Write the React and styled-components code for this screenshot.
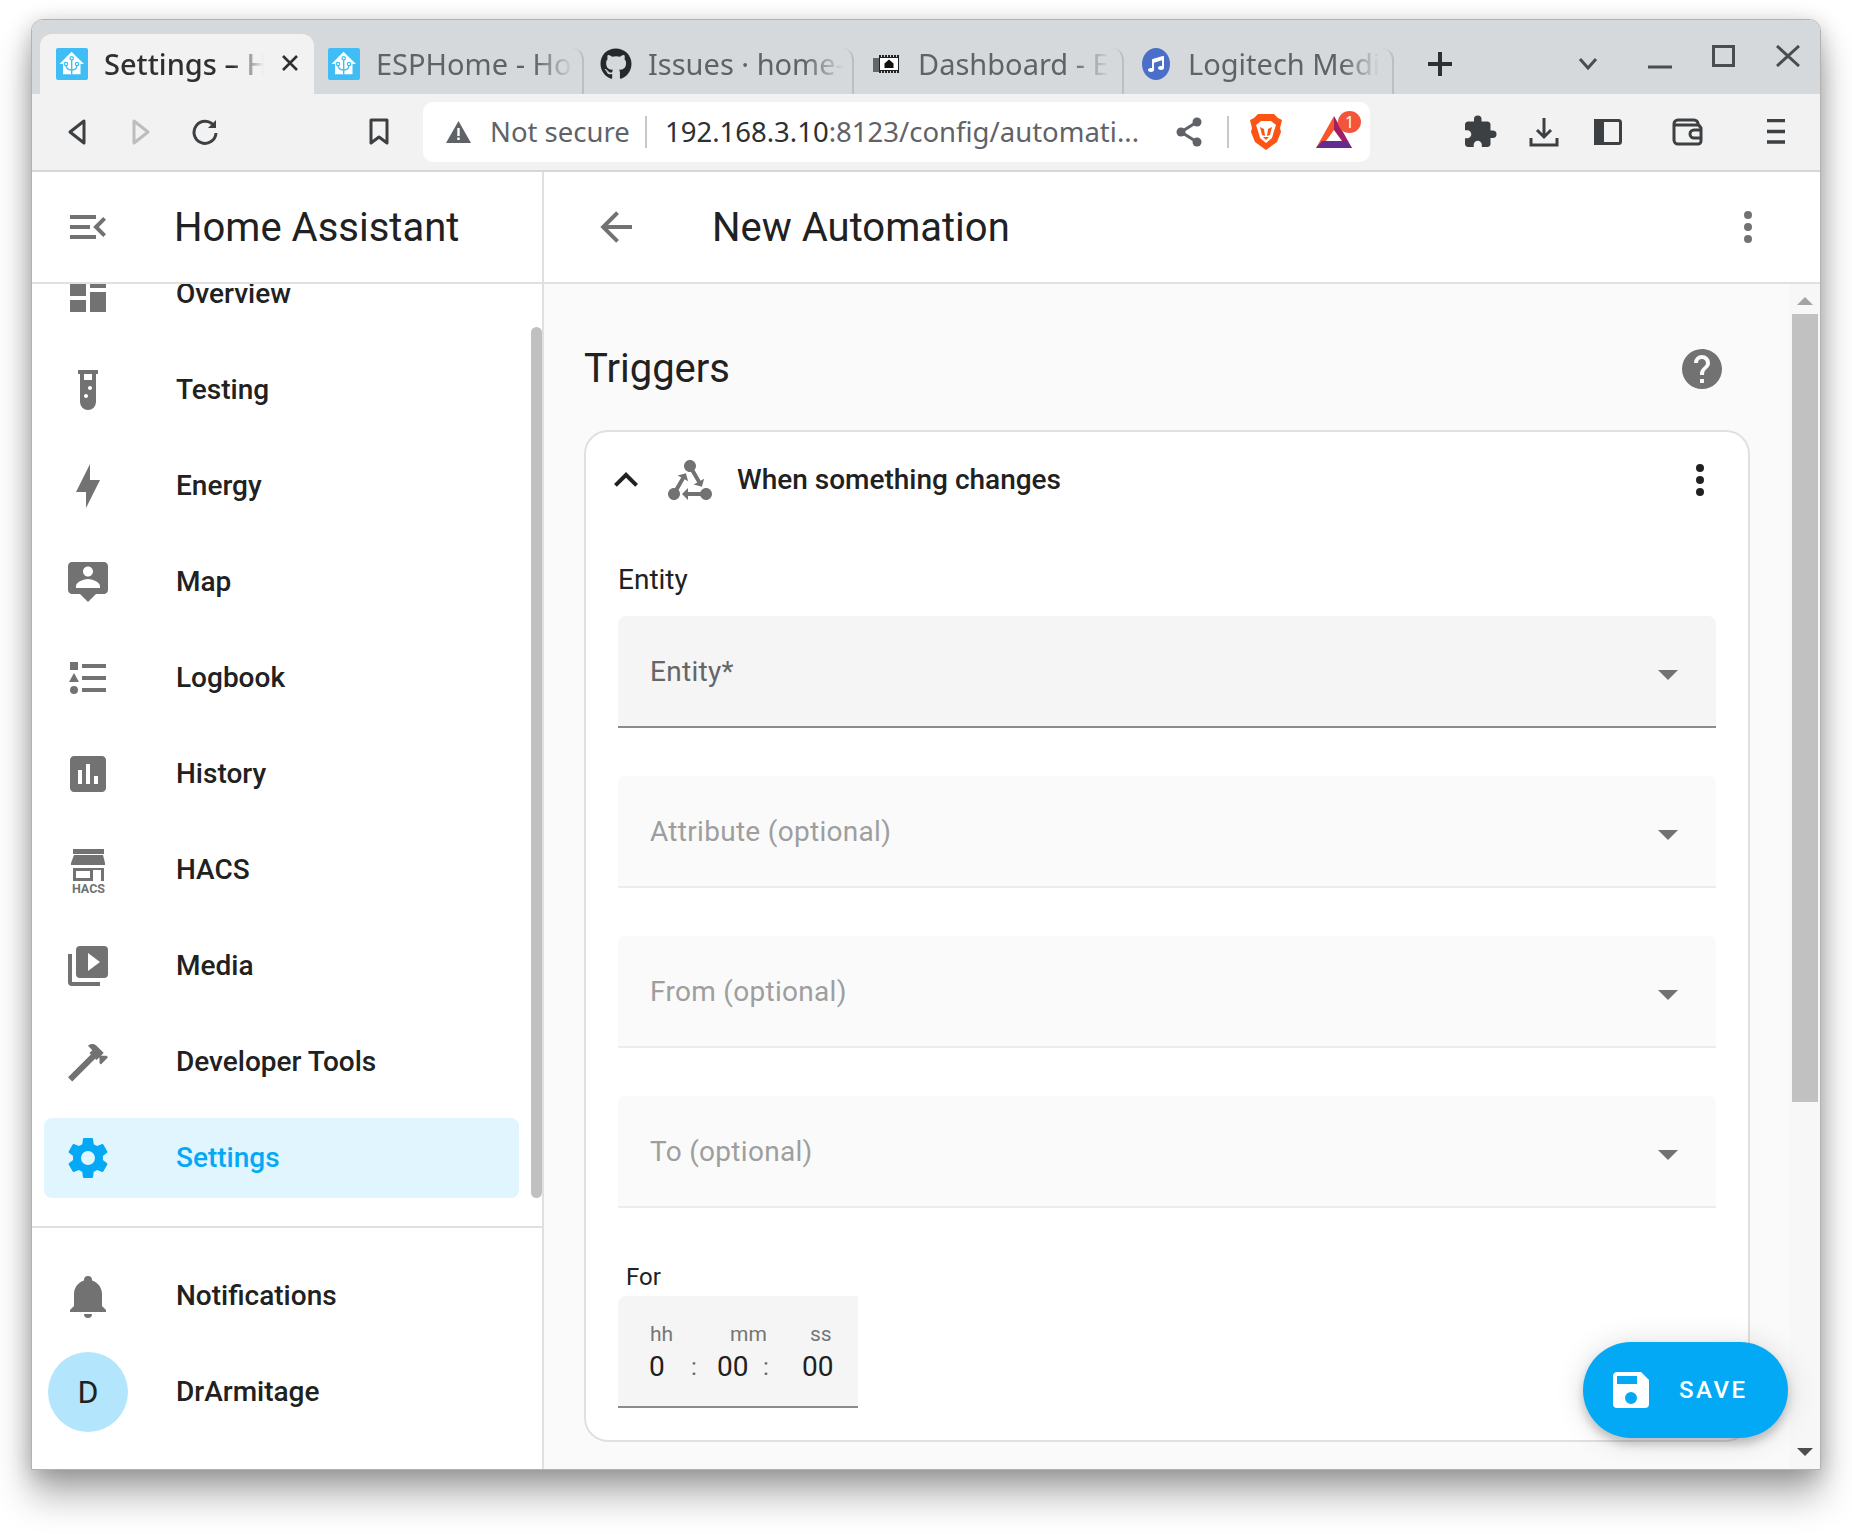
import React from "react";
import styled, { createGlobalStyle } from "styled-components";
import { FaGithub, FaMusic } from "react-icons/fa";
import { MdExtension } from "react-icons/md";

const paths = {
  dashboard: "M13,3V9H21V3M13,21H21V11H13M3,21H11V15H3M3,13H11V3H3V13Z",
  testTube:
    "M7,2V4H8V18A4,4 0 0,0 12,22A4,4 0 0,0 16,18V4H17V2H7M11,16C10.4,16 10,15.6 10,15C10,14.4 10.4,14 11,14C11.6,14 12,14.4 12,15C12,15.6 11.6,16 11,16M13,12C12.4,12 12,11.6 12,11C12,10.4 12.4,10 13,10C13.6,10 14,10.4 14,11C14,11.6 13.6,12 13,12M14,7H10V4H14V7Z",
  bolt: "M11 15H6L13 1V9H18L11 23V15Z",
  tooltipAccount:
    "M2 4C2 2.89 2.9 2 4 2H20C21.11 2 22 2.9 22 4V16C22 17.11 21.11 18 20 18H16L12 22L8 18H4C2.9 18 2 17.11 2 16V4M12 4.3C10.6 4.3 9.5 5.4 9.5 6.8S10.6 9.3 12 9.3 14.5 8.2 14.5 6.8 13.4 4.3 12 4.3M18 15V14C18 12 14 10.5 12 10.5S6 12 6 14V15H18Z",
  listType:
    "M5,9.5L7.5,14H2.5L5,9.5M3,4H7V8H3V4M5,20A2,2 0 0,0 7,18A2,2 0 0,0 5,16A2,2 0 0,0 3,18A2,2 0 0,0 5,20M9,5V7H21V5H9M9,19H21V17H9V19M9,13H21V11H9V13Z",
  chartBox:
    "M19 3H5C3.9 3 3 3.9 3 5V19C3 20.1 3.9 21 5 21H19C20.1 21 21 20.1 21 19V5C21 3.9 20.1 3 19 3M9 17H7V10H9V17M13 17H11V7H13V17M17 17H15V13H17V17Z",
  playBox:
    "M4,6H2V20A2,2 0 0,0 4,22H18V20H4V6M20,2H8A2,2 0 0,0 6,4V16A2,2 0 0,0 8,18H20A2,2 0 0,0 22,16V4A2,2 0 0,0 20,2M12,14.5V5.5L18,10L12,14.5Z",
  hammer:
    "M2 19.63L13.43 8.2L12.72 7.5L14.14 6.07L12 3.89C13.2 2.7 15.09 2.7 16.27 3.89L19.87 7.5L18.45 8.91H21.29L22 9.62L18.45 13.21L17.74 12.5V9.62L16.27 11.04L15.56 10.33L4.13 21.76L2 19.63Z",
  cog: "M12,15.5A3.5,3.5 0 0,1 8.5,12A3.5,3.5 0 0,1 12,8.5A3.5,3.5 0 0,1 15.5,12A3.5,3.5 0 0,1 12,15.5M19.43,12.97C19.47,12.65 19.5,12.33 19.5,12C19.5,11.67 19.47,11.34 19.43,11L21.54,9.37C21.73,9.22 21.78,8.95 21.66,8.73L19.66,5.27C19.54,5.05 19.27,4.96 19.05,5.05L16.56,6.05C16.04,5.66 15.5,5.32 14.87,5.07L14.5,2.42C14.46,2.18 14.25,2 14,2H10C9.75,2 9.54,2.18 9.5,2.42L9.13,5.07C8.5,5.32 7.96,5.66 7.44,6.05L4.95,5.05C4.73,4.96 4.46,5.05 4.34,5.27L2.34,8.73C2.21,8.95 2.27,9.22 2.46,9.37L4.57,11C4.53,11.34 4.5,11.67 4.5,12C4.5,12.33 4.53,12.65 4.57,12.97L2.46,14.63C2.27,14.78 2.21,15.05 2.34,15.27L4.34,18.73C4.46,18.95 4.73,19.03 4.95,18.95L7.44,17.94C7.96,18.34 8.5,18.68 9.13,18.93L9.5,21.58C9.54,21.82 9.75,22 10,22H14C14.25,22 14.46,21.82 14.5,21.58L14.87,18.93C15.5,18.67 16.04,18.34 16.56,17.94L19.05,18.95C19.27,19.03 19.54,18.95 19.66,18.73L21.66,15.27C21.78,15.05 21.73,14.78 21.54,14.63L19.43,12.97Z",
  bell: "M21,19V20H3V19L5,17V11C5,7.9 7.03,5.17 10,4.29C10,4.19 10,4.1 10,4A2,2 0 0,1 12,2A2,2 0 0,1 14,4C14,4.1 14,4.19 14,4.29C16.97,5.17 19,7.9 19,11V17L21,19M14,21A2,2 0 0,1 12,23A2,2 0 0,1 10,21",
  menuOpen:
    "M21,15.61L19.59,17L14.58,12L19.59,7L21,8.39L17.44,12L21,15.61M3,6H16V8H3V6M3,13V11H13V13H3M3,18V16H16V18H3Z",
  arrowLeft:
    "M20,11V13H8L13.5,18.5L12.08,19.92L4.16,12L12.08,4.08L13.5,5.5L8,11H20Z",
  dots: "M12,16A2,2 0 0,1 14,18A2,2 0 0,1 12,20A2,2 0 0,1 10,18A2,2 0 0,1 12,16M12,10A2,2 0 0,1 14,12A2,2 0 0,1 12,14A2,2 0 0,1 10,12A2,2 0 0,1 12,10M12,4A2,2 0 0,1 14,6A2,2 0 0,1 12,8A2,2 0 0,1 10,6A2,2 0 0,1 12,4Z",
  help: "M15.07,11.25L14.17,12.17C13.45,12.89 13,13.5 13,15H11V14.5C11,13.39 11.45,12.39 12.17,11.67L13.41,10.41C13.78,10.05 14,9.55 14,9C14,7.89 13.1,7 12,7A2,2 0 0,0 10,9H8A4,4 0 0,1 12,5A4,4 0 0,1 16,9C16,9.88 15.64,10.67 15.07,11.25M13,19H11V17H13M12,2A10,10 0 0,0 2,12A10,10 0 0,0 12,22A10,10 0 0,0 22,12C22,6.47 17.5,2 12,2Z",
  chevronUp: "M7.41,15.41L12,10.83L16.59,15.41L18,14L12,8L6,14L7.41,15.41Z",
  save: "M15,9H5V5H15M12,19A3,3 0 0,1 9,16A3,3 0 0,1 12,13A3,3 0 0,1 15,16A3,3 0 0,1 12,19M17,3H5C3.89,3 3,3.9 3,5V19A2,2 0 0,0 5,21H19A2,2 0 0,0 21,19V7L17,3Z",
  menuDown: "M7,10L12,15L17,10H7Z",
  stateMachine:
    "M6.27 17.05C6.72 17.58 7 18.25 7 19C7 20.66 5.66 22 4 22S1 20.66 1 19 2.34 16 4 16C4.18 16 4.36 16 4.53 16.05L7.6 10.69L5.86 9.7L9.95 8.58L11.07 12.67L9.33 11.68L6.27 17.05M20 16C18.7 16 17.6 16.84 17.18 18H11V16L8 19L11 22V20H17.18C17.6 21.16 18.7 22 20 22C21.66 22 23 20.66 23 19S21.66 16 20 16M12 8C12.18 8 12.36 8 12.53 7.95L15.6 13.31L13.86 14.3L17.95 15.42L19.07 11.33L17.33 12.32L14.27 6.95C14.72 6.42 15 5.75 15 5C15 3.34 13.66 2 12 2S9 3.34 9 5 10.34 8 12 8Z",
};

const GlobalStyle = createGlobalStyle`
  html, body {
    margin: 0;
    background: #fff;
  }
  * {
    box-sizing: border-box;
  }
`;

const chromeFont = `"Noto Sans", "Open Sans", sans-serif`;

const Page = styled.div`
  width: 1852px;
  height: 1534px;
  padding: 19px 0 0 31px;
  overflow: hidden;
  font-family: Roboto, sans-serif;
`;

const Window = styled.div`
  width: 1790px;
  height: 1451px;
  display: flex;
  flex-direction: column;
  border: 1px solid #b2b2b2;
  border-radius: 12px 12px 0 0;
  background: #fff;
  box-shadow: 0 26px 36px rgba(0, 0, 0, 0.3), 0 4px 22px rgba(0, 0, 0, 0.22);
`;

const TabStrip = styled.div`
  height: 74px;
  flex-shrink: 0;
  display: flex;
  align-items: flex-end;
  padding-left: 8px;
  background: #d6d9dc;
  border-radius: 11px 11px 0 0;
`;

const Tab = styled.div`
  position: relative;
  width: ${(p) => (p.$active ? 274 : 270)}px;
  height: ${(p) => (p.$active ? 60 : 46)}px;
  display: flex;
  align-items: center;
  padding-left: ${(p) => p.$pad}px;
  background: ${(p) => (p.$active ? "#f2f2f2" : "transparent")};
  border-radius: 12px 12px 0 0;
  border-right: ${(p) => (p.$active ? "none" : "2px solid #bcbfc2")};
`;

const TabIconSlot = styled.div`
  width: 32px;
  height: 32px;
  flex-shrink: 0;
  margin-top: ${(p) => (p.$active ? 0 : -14)}px;
  display: flex;
  align-items: center;
  justify-content: center;
`;

const TabTitle = styled.div`
  width: ${(p) => p.$w}px;
  margin-left: 16px;
  margin-top: ${(p) => (p.$active ? 0 : -14)}px;
  overflow: hidden;
  white-space: nowrap;
  font-family: ${chromeFont};
  font-size: 29px;
  font-weight: ${(p) => (p.$active ? 500 : 400)};
  line-height: 36px;
  color: ${(p) => (p.$active ? "#2d2f31" : "#5f6368")};
  mask-image: linear-gradient(to right, #000 80%, transparent 100%);
`;

const TabClose = styled.svg`
  position: absolute;
  left: 242px;
  top: 21px;
  width: 16px;
  height: 16px;
  stroke: #2d2f31;
  stroke-width: 2.6;
`;

const StripGroup = styled.div`
  display: flex;
  align-items: center;
  height: 46px;
  align-self: flex-end;
  padding-bottom: 14px;
  margin-left: ${(p) => p.$ml}px;
`;

const StripGlyph = styled.svg`
  display: block;
  fill: none;
  stroke: ${(p) => p.$color || "#4a4d50"};
  stroke-width: ${(p) => p.$sw || 3};
  margin-top: ${(p) => p.$mt || 0}px;
  margin-left: ${(p) => p.$ml || 0}px;
`;

const Toolbar = styled.div`
  height: 78px;
  flex-shrink: 0;
  display: flex;
  align-items: center;
  padding-left: 35px;
  background: #f2f2f2;
  border-bottom: 2px solid #d6d6d6;
`;

const ToolIcon = styled.svg`
  display: block;
  flex-shrink: 0;
  margin-left: ${(p) => p.$ml || 0}px;
  fill: none;
  stroke: ${(p) => p.$color || "#3c4043"};
  stroke-width: 3;
`;

const Omnibox = styled.div`
  width: 947px;
  height: 60px;
  flex-shrink: 0;
  margin-left: 33px;
  display: flex;
  align-items: center;
  padding-left: 23px;
  background: #fff;
  border-radius: 10px;
`;

const NotSecure = styled.span`
  width: 138px;
  flex-shrink: 0;
  margin: -2px 0 0 19px;
  font-family: ${chromeFont};
  font-size: 27.5px;
  color: #5f6368;
  white-space: nowrap;
`;

const OmniDivider = styled.div`
  width: 2px;
  height: 32px;
  flex-shrink: 0;
  margin-left: ${(p) => p.$ml}px;
  background: #c6c8ca;
`;

const UrlText = styled.div`
  width: 473px;
  margin: -2px 0 0 18px;
  flex-shrink: 0;
  overflow: hidden;
  white-space: nowrap;
  font-family: ${chromeFont};
  font-size: 27.5px;
  color: #5f6368;
  b {
    font-weight: 400;
    color: #2d2f31;
  }
`;

const BadgeSlot = styled.div`
  position: relative;
  width: 36px;
  height: 32px;
  margin-left: 34px;
  flex-shrink: 0;
`;

const Badge = styled.span`
  position: absolute;
  right: -9px;
  top: -5px;
  width: 23px;
  height: 22px;
  border-radius: 50%;
  background: #f4553a;
  color: #fff;
  font-size: 16px;
  line-height: 22px;
  text-align: center;
  font-family: ${chromeFont};
`;

const Body = styled.div`
  flex: 1;
  min-height: 0;
  display: flex;
`;

const Sidebar = styled.aside`
  width: 512px;
  flex-shrink: 0;
  display: flex;
  flex-direction: column;
  border-right: 2px solid #e0e0e0;
  background: #fff;
`;

const AppHeader = styled.header`
  height: 112px;
  flex-shrink: 0;
  display: flex;
  align-items: center;
  padding-left: ${(p) => p.$pad}px;
  padding-right: ${(p) => p.$padRight || 0}px;
  border-bottom: 2px solid #e0e0e0;
  background: #fff;
`;

const AppTitle = styled.div`
  flex: 1;
  margin-left: ${(p) => p.$ml}px;
  margin-top: 2px;
  font-size: 40px;
  line-height: 48px;
  color: #212121;
`;

const Icon = styled.svg`
  display: block;
  flex-shrink: 0;
  width: ${(p) => p.$size || 48}px;
  height: ${(p) => p.$size || 48}px;
  fill: ${(p) => p.$color || "#727272"};
`;

const NavScroll = styled.div`
  position: relative;
  height: 944px;
  flex-shrink: 0;
  overflow: hidden;
  border-bottom: 2px solid #e0e0e0;
  padding: 0 0 0 12px;
`;

const NavList = styled.div`
  margin-top: -30px;
  width: 475px;
  display: flex;
  flex-direction: column;
  gap: 16px;
`;

const NavItem = styled.div`
  height: 80px;
  flex-shrink: 0;
  display: flex;
  align-items: center;
  padding-left: 20px;
  border-radius: 8px;
  background: ${(p) => (p.$active ? "#e1f5fe" : "transparent")};
  color: ${(p) => (p.$active ? "#03a9f4" : "#212121")};
`;

const NavLabel = styled.span`
  margin-left: 64px;
  font-size: 28px;
  font-weight: 500;
  line-height: 40px;
  white-space: nowrap;
`;

const SideThumb = styled.div`
  position: absolute;
  right: 0;
  top: 43px;
  width: 11px;
  height: 871px;
  border-radius: 6px;
  background: #c0c0c0;
`;

const SideFooter = styled.div`
  padding: 28px 0 0 12px;
  width: 487px;
  display: flex;
  flex-direction: column;
  gap: 16px;
`;

const Avatar = styled.div`
  width: 80px;
  height: 80px;
  flex-shrink: 0;
  margin: 0 -16px;
  border-radius: 50%;
  background: #b3e5fc;
  color: #212121;
  font-size: 32px;
  line-height: 80px;
  text-align: center;
`;

const Main = styled.main`
  position: relative;
  flex: 1;
  min-width: 0;
  display: flex;
  flex-direction: column;
  background: #fafafa;
`;

const ContentRow = styled.div`
  flex: 1;
  min-height: 0;
  display: flex;
  overflow: hidden;
`;

const Content = styled.div`
  flex: 1;
  min-width: 0;
  padding: 61px 0 0 40px;
`;

const SectionHead = styled.div`
  width: 1166px;
  display: flex;
  align-items: center;
  justify-content: space-between;
  padding-right: 24px;
  margin-bottom: 37px;
`;

const SectionTitle = styled.h1`
  margin: 0;
  font-size: 40px;
  font-weight: 400;
  line-height: 48px;
  color: #212121;
`;

const Card = styled.section`
  width: 1166px;
  background: #fff;
  border: 2px solid #e0e0e0;
  border-radius: 24px;
`;

const CardHead = styled.div`
  height: 96px;
  display: flex;
  align-items: center;
  padding: 0 24px 0 16px;
`;

const CardTitle = styled.div`
  flex: 1;
  margin-left: 23px;
  margin-top: -2px;
  font-size: 28px;
  font-weight: 500;
  color: #212121;
`;

const StateIcon = styled(Icon)`
  margin-left: 16px;
`;

const CardBody = styled.div`
  padding: 32px;
`;

const FieldCaption = styled.div`
  font-size: 28px;
  line-height: 40px;
  margin-bottom: 16px;
  color: #212121;
`;

const SelectField = styled.div`
  height: 112px;
  margin-bottom: ${(p) => (p.$last ? 0 : 48)}px;
  display: flex;
  align-items: center;
  justify-content: space-between;
  padding: 0 24px 0 32px;
  border-radius: 8px 8px 0 0;
  background: ${(p) => (p.$disabled ? "#fafafa" : "#f5f5f5")};
  border-bottom: 2px solid ${(p) => (p.$disabled ? "#ececec" : "#8c8c8c")};
  color: ${(p) => (p.$disabled ? "#9e9e9e" : "#666")};
  font-size: 28px;
  letter-spacing: 0.3px;
  svg {
    margin-top: 6px;
  }
`;

const ForCaption = styled.div`
  margin: 53px 0 3px 8px;
  font-size: 24px;
  line-height: 32px;
  color: #212121;
`;

const TimeField = styled.div`
  width: 240px;
  height: 112px;
  padding: 24px 0 0 31px;
  border-radius: 8px 0 0 0;
  background: #f5f5f5;
  border-bottom: 2px solid #8c8c8c;
`;

const TimeRow = styled.div`
  display: flex;
  height: ${(p) => p.$h}px;
  line-height: ${(p) => p.$h}px;
  padding-left: ${(p) => p.$pl || 0}px;
  margin-top: ${(p) => p.$mt || 0}px;
`;

const TimeLabel = styled.span`
  width: ${(p) => p.$w}px;
  font-size: 21px;
  color: #757575;
`;

const TimeValue = styled.span`
  width: ${(p) => p.$w}px;
  font-size: ${(p) => (p.$colon ? 24 : 28)}px;
  color: ${(p) => (p.$colon ? "#666" : "#212121")};
`;

const PageScrollbar = styled.div`
  width: 30px;
  flex-shrink: 0;
  display: flex;
  flex-direction: column;
  align-items: center;
  padding: 13px 0 0;
  background: #f7f7f7;
`;

const ScrollArrow = styled.div`
  width: 0;
  height: 0;
  flex-shrink: 0;
  border-left: 8px solid transparent;
  border-right: 8px solid transparent;
  ${(p) =>
    p.$down
      ? "border-top: 8px solid #4d4d4d; margin-top: 346px;"
      : "border-bottom: 8px solid #a3a3a3;"}
`;

const ScrollThumb = styled.div`
  width: 26px;
  height: 788px;
  margin-top: 9px;
  flex-shrink: 0;
  background: #c1c1c1;
`;

const Fab = styled.button`
  position: absolute;
  right: 32px;
  bottom: 31px;
  width: 205px;
  height: 96px;
  display: flex;
  align-items: center;
  padding: 0 0 0 24px;
  border: 0;
  border-radius: 48px;
  background: #03a9f4;
  color: #fff;
  font-family: Roboto, sans-serif;
  font-size: 24px;
  font-weight: 500;
  letter-spacing: 2.5px;
  box-shadow: 0 6px 10px rgba(0, 0, 0, 0.2), 0 2px 30px rgba(0, 0, 0, 0.14);
`;

const FabLabel = styled.span`
  margin-left: 24px;
`;

const Mdi = ({ d, size, color }) => (
  <Icon viewBox="0 0 24 24" $size={size} $color={color}>
    <path d={d} />
  </Icon>
);

const HaFavicon = () => (
  <svg width="32" height="32" viewBox="0 0 32 32">
    <rect width="32" height="32" rx="2" fill="#41bdf5" />
    <path d="M15.5 3.7 L28 16 H24.5 V26.3 H7 V16 H3.5 Z" fill="#fff" />
    <path
      d="M15.7 26.3 V11 M15.7 22 C12 22 10 20 10 17 M15.7 22 C19 22 21 20 21 17"
      stroke="#41bdf5"
      strokeWidth="1.4"
      fill="none"
    />
    <circle cx="15.7" cy="10.3" r="1.7" fill="#fff" stroke="#41bdf5" strokeWidth="1.2" />
    <circle cx="10" cy="16" r="1.7" fill="#fff" stroke="#41bdf5" strokeWidth="1.2" />
    <circle cx="21" cy="16" r="1.7" fill="#fff" stroke="#41bdf5" strokeWidth="1.2" />
  </svg>
);

const ChipFavicon = () => (
  <svg width="26" height="20" viewBox="0 0 26 20">
    <rect x="0" y="4" width="6" height="14" fill="#666" />
    <path d="M6 2 H26 M6 18 H26" stroke="#222" strokeWidth="2" strokeDasharray="2 1" />
    <rect x="6.5" y="3.5" width="19" height="13" fill="#fff" stroke="#222" />
    <path d="M16 5.5 L20.5 9.5 V14 H11.5 V9.5 Z" fill="#111" />
  </svg>
);

const MusicFavicon = () => (
  <svg width="28" height="32" viewBox="0 0 28 32">
    <ellipse cx="14" cy="16" rx="14" ry="16" fill="#4a6fc9" />
    <foreignObject x="6" y="8" width="16" height="16">
      <FaMusic color="#fff" size={16} />
    </foreignObject>
  </svg>
);

const BraveLion = () => (
  <svg width="32" height="36" viewBox="0 0 32 36" style={{ marginLeft: 21, flexShrink: 0 }}>
    <path d="M8 0 H24 L28 4 L32 6 L30 14 L31 18 L27 28 L16 36 L5 28 L1 18 L2 14 L0 6 L4 4 Z" fill="#fb5414" />
    <path d="M6 11 L11 7 H21 L26 11 L24 17 L22 24 L16 29 L10 24 L8 17 Z" fill="#fff" />
    <path d="M10 13 L14 15 L15 22 L12 21 Z M22 13 L18 15 L17 22 L20 21 Z" fill="#fb5414" />
    <path d="M13 23 H19 L16 26 Z" fill="#fb5414" />
  </svg>
);

const BatLogo = () => (
  <svg width="36" height="32" viewBox="0 0 36 32">
    <polygon points="18,0 0,32 18,32" fill="#f8552d" />
    <polygon points="18,0 36,32 18,32" fill="#9e1f63" />
    <polygon points="6,25 30,25 36,32 0,32" fill="#662d91" />
    <polygon points="18,14 26,25 10,25" fill="#fff" />
  </svg>
);

const navItems = [
  ["Overview", paths.dashboard],
  ["Testing", paths.testTube],
  ["Energy", paths.bolt],
  ["Map", paths.tooltipAccount],
  ["Logbook", paths.listType],
  ["History", paths.chartBox],
  ["HACS", "hacs"],
  ["Media", paths.playBox],
  ["Developer Tools", paths.hammer],
  ["Settings", paths.cog],
];

const HacsIcon = () => (
  <Icon viewBox="0 0 48 48">
    <rect x="9" y="3" width="31" height="5" />
    <path d="M10 9 H39 L41 17 V19 H7 V17 Z" />
    <path d="M9 22 H40 V35 H37 V24 H29 V35 H9 Z M12 25 V32 H26 V25 Z" fillRule="evenodd" />
    <text x="24.5" y="47" fontFamily="Roboto, sans-serif" fontWeight="700" fontSize="12.5" textAnchor="middle">
      HACS
    </text>
  </Icon>
);

const tabs = [
  { title: "ESPHome - Hor", icon: <HaFavicon />, pad: 14, w: 198 },
  { title: "Issues · home-a", icon: <FaGithub size={32} color="#24292e" />, pad: 16, w: 196 },
  { title: "Dashboard - ES", icon: <ChipFavicon />, pad: 16, w: 192 },
  { title: "Logitech Media", icon: <MusicFavicon />, pad: 16, w: 192 },
];

const selects = [
  { label: "Attribute (optional)" },
  { label: "From (optional)" },
  { label: "To (optional)", last: true },
];

export default function App() {
  return (
    <>
      <GlobalStyle />
      <Page>
        <Window>
          <TabStrip>
            <Tab $active $pad={16}>
              <TabIconSlot $active>
                <HaFavicon />
              </TabIconSlot>
              <TabTitle $active $w={160}>
                Settings – H
              </TabTitle>
              <TabClose viewBox="0 0 16 16">
                <path d="M1 1 L15 15 M15 1 L1 15" />
              </TabClose>
            </Tab>
            {tabs.map((t) => (
              <Tab key={t.title} $pad={t.pad}>
                <TabIconSlot>{t.icon}</TabIconSlot>
                <TabTitle $w={t.w}>{t.title}</TabTitle>
              </Tab>
            ))}
            <StripGroup $ml={33}>
              <StripGlyph width="26" height="26" viewBox="0 0 26 26" $color="#2d2f31" $sw={4}>
                <path d="M13 1 V25 M1 13 H25" />
              </StripGlyph>
              <StripGlyph width="20" height="12" viewBox="0 0 20 12" $ml={125}>
                <path d="M2 1 L10 10 L18 1" />
              </StripGlyph>
              <StripGlyph width="24" height="4" viewBox="0 0 24 4" $ml={50} $mt={6}>
                <path d="M0 2 H24" />
              </StripGlyph>
              <StripGlyph width="24" height="22" viewBox="0 0 24 22" $ml={40} $mt={-16}>
                <rect x="1.5" y="1.5" width="20" height="19" />
              </StripGlyph>
              <StripGlyph width="24" height="22" viewBox="0 0 24 22" $ml={40} $mt={-16}>
                <path d="M1 1 L23 21 M23 1 L1 21" />
              </StripGlyph>
            </StripGroup>
          </TabStrip>

          <Toolbar>
            <ToolIcon width="20" height="28" viewBox="0 0 20 28">
              <path d="M17 3 L3 14 L17 25 Z" strokeLinejoin="round" />
            </ToolIcon>
            <ToolIcon width="20" height="28" viewBox="0 0 20 28" $ml={44} $color="#bdbdbd">
              <path d="M3 3 L17 14 L3 25 Z" strokeLinejoin="round" />
            </ToolIcon>
            <ToolIcon width="28" height="28" viewBox="0 0 28 28" $ml={40}>
              <path d="M23 8 A11 11 0 1 0 25 15" />
              <path d="M25 2 V10 H17 Z" fill="#3c4043" stroke="none" />
            </ToolIcon>
            <ToolIcon width="22" height="28" viewBox="0 0 22 28" $ml={149}>
              <path d="M3 2 H19 V25 L11 19 L3 25 Z" strokeLinejoin="round" />
            </ToolIcon>
            <Omnibox>
              <svg width="25" height="22" viewBox="0 0 25 22" style={{ flexShrink: 0 }}>
                <path d="M12.5 0 L25 22 H0 Z M11.3 7 V15 H13.7 V7 Z M11.3 16.5 V19 H13.7 V16.5 Z" fill="#5f6368" fillRule="evenodd" />
              </svg>
              <NotSecure>Not secure</NotSecure>
              <OmniDivider $ml={17} />
              <UrlText>
                <b>192.168.3.10</b>:8123/config/automati...
              </UrlText>
              <svg width="26" height="30" viewBox="0 0 26 30" style={{ marginLeft: 38, flexShrink: 0 }}>
                <path d="M21 5 L5 15 L21 25" stroke="#5f6368" strokeWidth="3" fill="none" />
                <circle cx="21" cy="5" r="4.5" fill="#5f6368" />
                <circle cx="5" cy="15" r="4.5" fill="#5f6368" />
                <circle cx="21" cy="25" r="4.5" fill="#5f6368" />
              </svg>
              <OmniDivider $ml={25} />
              <BraveLion />
              <BadgeSlot>
                <BatLogo />
                <Badge>1</Badge>
              </BadgeSlot>
            </Omnibox>
            <MdExtension size={36} color="#3c4043" style={{ marginLeft: 92, flexShrink: 0 }} />
            <ToolIcon width="30" height="30" viewBox="0 0 30 30" $ml={31}>
              <path d="M15 1 V20 M8 13 L15 20 L22 13" />
              <path d="M2 21 V28 H28 V21" />
            </ToolIcon>
            <ToolIcon width="28" height="26" viewBox="0 0 28 26" $ml={35}>
              <rect x="1.5" y="1.5" width="25" height="23" rx="2" />
              <rect x="1.5" y="1.5" width="7" height="23" fill="#3c4043" />
            </ToolIcon>
            <ToolIcon width="32" height="28" viewBox="0 0 32 28" $ml={50}>
              <path d="M2 6 A4 4 0 0 1 6 2 H22 A4 4 0 0 1 26 6 L29 10 V23 A3 3 0 0 1 26 26 H6 A4 4 0 0 1 2 22 Z" strokeLinejoin="round" />
              <path d="M3 7 H26" />
              <path d="M30 12 H22 A4 4 0 0 0 22 20 H30" />
            </ToolIcon>
            <ToolIcon width="20" height="26" viewBox="0 0 20 26" $ml={62}>
              <path d="M1 1.5 H19 M1 12.5 H19 M1 23 H19" strokeWidth="3.4" />
            </ToolIcon>
          </Toolbar>

          <Body>
            <Sidebar>
              <AppHeader $pad={32}>
                <Mdi d={paths.menuOpen} />
                <AppTitle $ml={62}>Home Assistant</AppTitle>
              </AppHeader>
              <NavScroll>
                <NavList>
                  {navItems.map(([label, d]) => (
                    <NavItem key={label} $active={label === "Settings"}>
                      {d === "hacs" ? (
                        <HacsIcon />
                      ) : (
                        <Mdi d={d} color={label === "Settings" ? "#03a9f4" : undefined} />
                      )}
                      <NavLabel>{label}</NavLabel>
                    </NavItem>
                  ))}
                </NavList>
                <SideThumb />
              </NavScroll>
              <SideFooter>
                <NavItem>
                  <Mdi d={paths.bell} />
                  <NavLabel>Notifications</NavLabel>
                </NavItem>
                <NavItem>
                  <Avatar>D</Avatar>
                  <NavLabel>DrArmitage</NavLabel>
                </NavItem>
              </SideFooter>
            </Sidebar>

            <Main>
              <AppHeader $pad={48} $padRight={48}>
                <Mdi d={paths.arrowLeft} />
                <AppTitle $ml={72}>New Automation</AppTitle>
                <Mdi d={paths.dots} />
              </AppHeader>
              <ContentRow>
                <Content>
                  <SectionHead>
                    <SectionTitle>Triggers</SectionTitle>
                    <Mdi d={paths.help} />
                  </SectionHead>
                  <Card>
                    <CardHead>
                      <Mdi d={paths.chevronUp} color="#212121" />
                      <StateIcon viewBox="0 0 24 24">
                        <path d={paths.stateMachine} />
                      </StateIcon>
                      <CardTitle>When something changes</CardTitle>
                      <Mdi d={paths.dots} color="#212121" />
                    </CardHead>
                    <CardBody>
                      <FieldCaption>Entity</FieldCaption>
                      <SelectField>
                        Entity*
                        <Mdi d={paths.menuDown} />
                      </SelectField>
                      {selects.map((s) => (
                        <SelectField key={s.label} $disabled $last={s.last}>
                          {s.label}
                          <Mdi d={paths.menuDown} />
                        </SelectField>
                      ))}
                      <ForCaption>For</ForCaption>
                      <TimeField>
                        <TimeRow $h={28} $pl={1}>
                          <TimeLabel $w={80}>hh</TimeLabel>
                          <TimeLabel $w={80}>mm</TimeLabel>
                          <TimeLabel $w={40}>ss</TimeLabel>
                        </TimeRow>
                        <TimeRow $h={36} $mt={1}>
                          <TimeValue $w={42}>0</TimeValue>
                          <TimeValue $w={26} $colon>:</TimeValue>
                          <TimeValue $w={46}>00</TimeValue>
                          <TimeValue $w={39} $colon>:</TimeValue>
                          <TimeValue $w={40}>00</TimeValue>
                        </TimeRow>
                      </TimeField>
                    </CardBody>
                  </Card>
                </Content>
                <PageScrollbar>
                  <ScrollArrow />
                  <ScrollThumb />
                  <ScrollArrow $down />
                </PageScrollbar>
              </ContentRow>
              <Fab>
                <Mdi d={paths.save} color="#fff" />
                <FabLabel>SAVE</FabLabel>
              </Fab>
            </Main>
          </Body>
        </Window>
      </Page>
    </>
  );
}
